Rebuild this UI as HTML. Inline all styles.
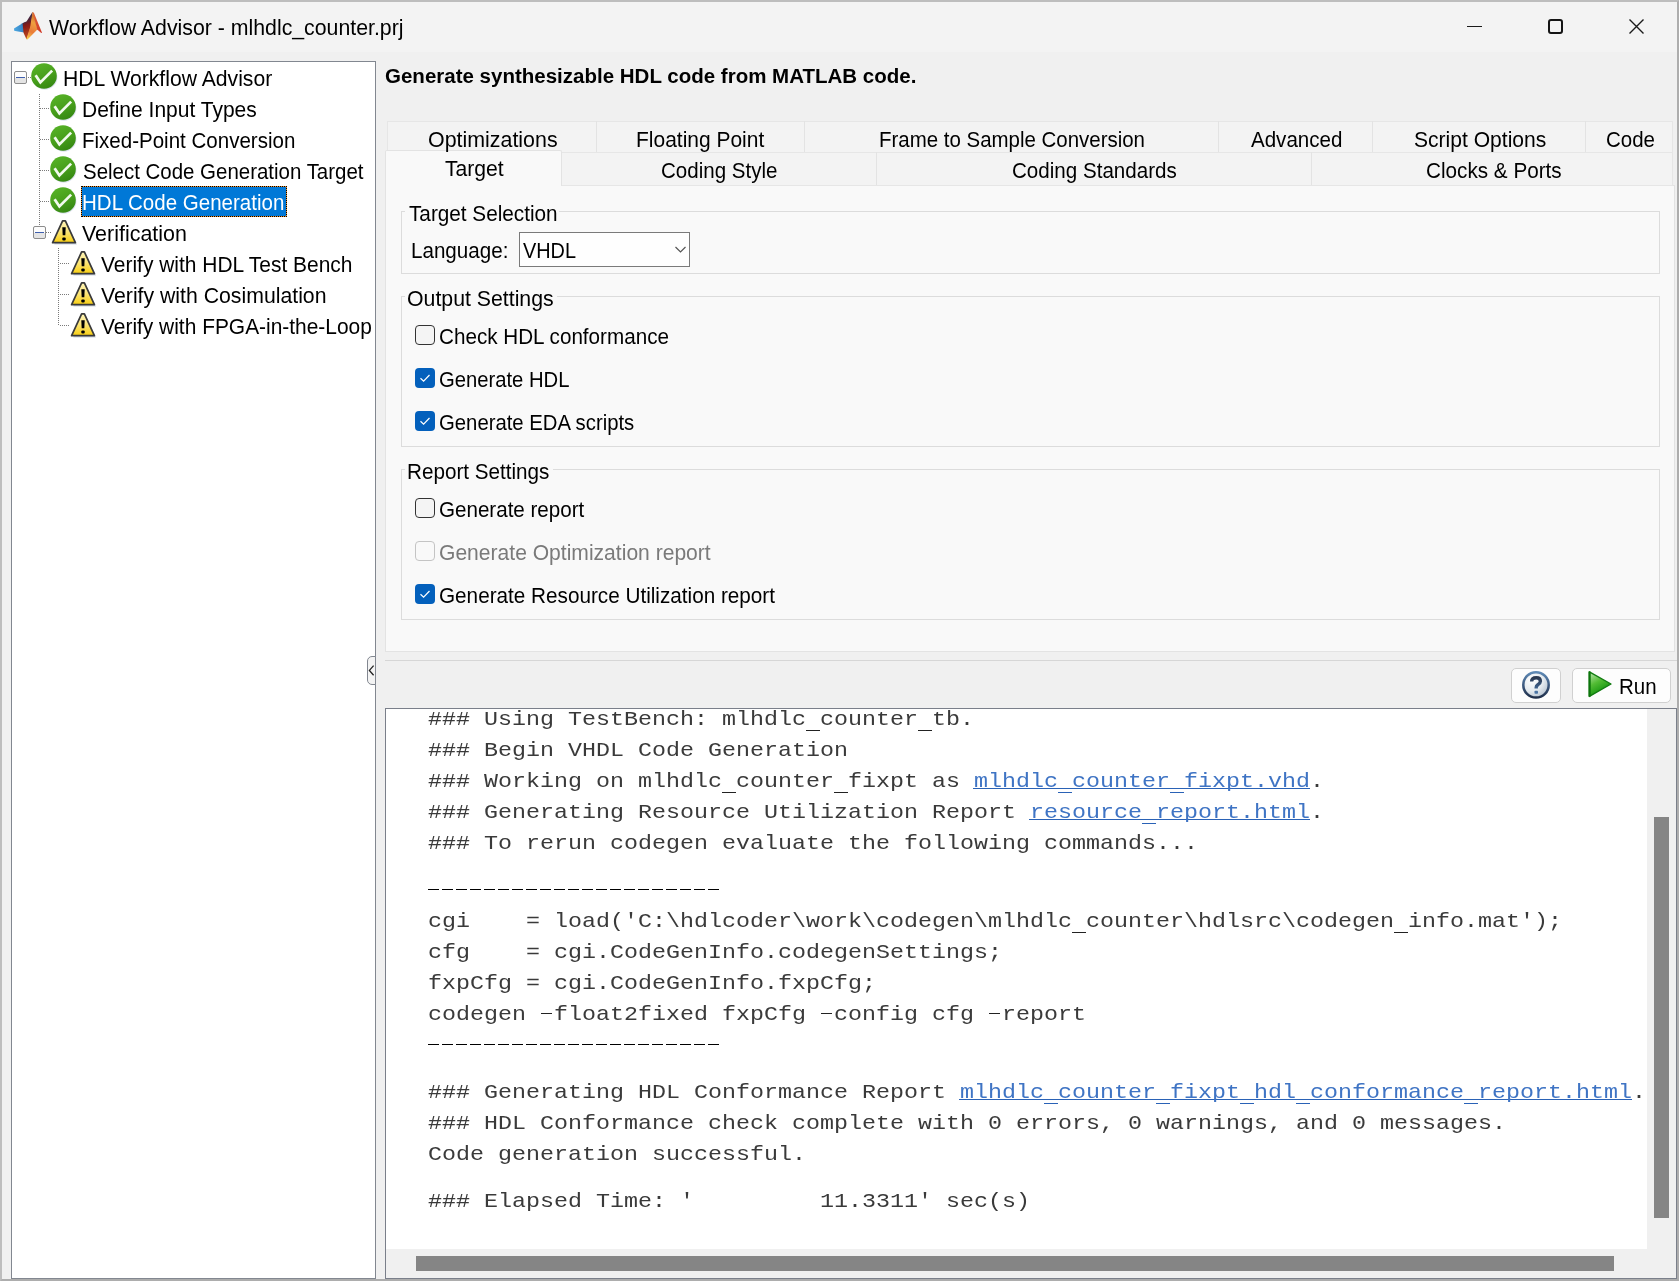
<!DOCTYPE html>
<html><head><meta charset="utf-8">
<style>
html,body{margin:0;padding:0;}
body{width:1679px;height:1281px;position:relative;overflow:hidden;background:#f0f0f0;font-family:"Liberation Sans",sans-serif;}
.a{position:absolute;box-sizing:border-box;}
.t{position:absolute;white-space:pre;transform-origin:0 0;font-family:"Liberation Sans",sans-serif;}
.m{position:absolute;left:428px;white-space:pre;font-family:"Liberation Mono",monospace;color:#3a3a3a;line-height:31px;font-size:23.3333px;letter-spacing:0.000px;}
.lk{color:#3f74c4;}
.us{width:14px;height:1px;background:#222;}
.dotv{position:absolute;width:1px;background-image:linear-gradient(to bottom,#7a7a7a 50%,transparent 50%);background-size:1px 2px;}
.doth{position:absolute;height:1px;background-image:linear-gradient(to right,#7a7a7a 50%,transparent 50%);background-size:2px 1px;}
.cb{position:absolute;width:20px;height:20px;box-sizing:border-box;border-radius:4px;}
.cbu{border:1px solid #333;background:#f4f4f4;}
.cbd{border:1px solid #c4c4c4;background:#f9f9f9;}
.cbc{background:#0360bc;}
.grp{position:absolute;box-sizing:border-box;border:1px solid #dcdcdc;}
.exp{position:absolute;width:13px;height:13px;box-sizing:border-box;border:1px solid #8c8c8c;border-radius:2px;background:linear-gradient(#fcfcfc 6px,#e4e4e4 6px);}
.exp::after{content:"";position:absolute;left:1px;top:5px;width:9px;height:1px;background:#3f5fae;}
</style></head><body>
<!-- window border -->
<div class="a" style="left:0;top:0;width:1679px;height:1281px;border:2px solid #adadad;border-top-color:#bdbdbd;border-left-color:#bdbdbd;"></div>
<!-- title bar -->
<div class="a" style="left:2px;top:2px;width:1675px;height:50px;background:#f3f3f3;"></div>
<!-- matlab logo -->
<svg class="a" style="left:10px;top:8px" width="36" height="36" viewBox="0 0 36 36">
  <defs>
    <filter id="mlb" x="-20%" y="-20%" width="140%" height="140%"><feGaussianBlur stdDeviation="0.55"/></filter>
    <linearGradient id="mlbl" x1="0" y1="0.5" x2="1" y2="0.3"><stop offset="0" stop-color="#4aa6e0"/><stop offset="0.6" stop-color="#3a88c8"/><stop offset="1" stop-color="#24508a"/></linearGradient>
    <linearGradient id="mlor" x1="0.5" y1="0" x2="0.3" y2="1"><stop offset="0" stop-color="#c8641e"/><stop offset="0.35" stop-color="#eea040"/><stop offset="0.7" stop-color="#ea7a38"/><stop offset="1" stop-color="#f4c848"/></linearGradient>
    <linearGradient id="mlrd" x1="0" y1="0" x2="1" y2="1"><stop offset="0" stop-color="#e06a3a"/><stop offset="1" stop-color="#cf3424"/></linearGradient>
    <linearGradient id="mldk" x1="0" y1="0" x2="0.15" y2="1"><stop offset="0" stop-color="#2c3a64"/><stop offset="0.35" stop-color="#4a2438"/><stop offset="0.55" stop-color="#8a1a14"/><stop offset="1" stop-color="#c04a20"/></linearGradient>
  </defs>
  <g filter="url(#mlb)">
    <polygon points="4,20.5 12.5,15.2 16.5,13.6 14.2,24.6 8,23.6 4.2,22.8" fill="url(#mlbl)"/>
    <polygon points="12.6,15.3 16.5,13.6 22.5,4 21.3,17 17.6,28.5 16.6,31.5 13.6,25" fill="url(#mldk)"/>
    <polygon points="22.5,4 23.6,5 27.4,21.6 17.5,31.5 16.4,31 20.2,19" fill="url(#mlor)"/>
    <polygon points="22.5,4 24,5 32,24.8 31.2,25 27.2,21.4" fill="url(#mlrd)"/>
  </g>
</svg>
<!-- window controls -->
<div class="a" style="left:1467px;top:26px;width:15px;height:1px;background:#1a1a1a;"></div>
<div class="a" style="left:1548px;top:19px;width:15px;height:15px;border:2px solid #141414;border-radius:3px;"></div>
<svg class="a" style="left:1628px;top:18px" width="17" height="17" viewBox="0 0 17 17"><path d="M1.5 1.5 L15.5 15.5 M15.5 1.5 L1.5 15.5" stroke="#1a1a1a" stroke-width="1.4"/></svg>

<!-- tree panel -->
<div class="a" style="left:11px;top:61px;width:365px;height:1218px;background:#fff;border:1px solid #828790;"></div>
<!-- tree lines -->
<div class="doth" style="left:28px;top:77px;width:3px;"></div>
<div class="dotv" style="left:39px;top:94px;height:132px;"></div>
<div class="doth" style="left:40px;top:108px;width:10px;"></div>
<div class="doth" style="left:40px;top:139px;width:10px;"></div>
<div class="doth" style="left:40px;top:170px;width:10px;"></div>
<div class="doth" style="left:40px;top:201px;width:10px;"></div>
<div class="doth" style="left:46px;top:232px;width:5px;"></div>
<div class="dotv" style="left:58px;top:248px;height:78px;"></div>
<div class="doth" style="left:60px;top:263px;width:10px;"></div>
<div class="doth" style="left:60px;top:294px;width:10px;"></div>
<div class="doth" style="left:60px;top:325px;width:10px;"></div>
<div class="exp" style="left:14px;top:71px;"></div>
<div class="exp" style="left:33px;top:226px;"></div>
<!-- check icons -->
<svg width="0" height="0" style="position:absolute">
  <defs>
    <linearGradient id="gck" x1="0.3" y1="0.05" x2="0.7" y2="0.95"><stop offset="0" stop-color="#55b026"/><stop offset="0.5" stop-color="#48a01c"/><stop offset="1" stop-color="#358812"/></linearGradient>
    <linearGradient id="gwn" x1="0" y1="0" x2="0" y2="1"><stop offset="0" stop-color="#fff5b8"/><stop offset="0.45" stop-color="#fbe680"/><stop offset="1" stop-color="#f9cf10"/></linearGradient>
    <linearGradient id="gpl" x1="0" y1="0" x2="1" y2="1"><stop offset="0" stop-color="#7ad06a"/><stop offset="0.5" stop-color="#3aa82a"/><stop offset="1" stop-color="#127a10"/></linearGradient>
    <radialGradient id="ghp" cx="0.5" cy="0.75" r="0.7"><stop offset="0" stop-color="#ffffff"/><stop offset="0.6" stop-color="#dde5ee"/><stop offset="1" stop-color="#a9b8c8"/></radialGradient>
    
    
  </defs>
</svg>
<svg class="a" style="left:31px;top:63px;overflow:visible" width="26" height="26" viewBox="0 0 26 26"><circle cx="13.8" cy="14.2" r="12.6" fill="#b4c0dc" opacity="0.45"/>
      <circle cx="13" cy="13" r="12.8" fill="url(#gck)"/>
      <path d="M5.3 13.3 L9.4 19.4 L20.2 8.6" fill="none" stroke="#f2faee" stroke-width="2.7" stroke-linecap="square" stroke-linejoin="miter"/></svg>
<svg class="a" style="left:50px;top:94px;overflow:visible" width="26" height="26" viewBox="0 0 26 26"><circle cx="13.8" cy="14.2" r="12.6" fill="#b4c0dc" opacity="0.45"/>
      <circle cx="13" cy="13" r="12.8" fill="url(#gck)"/>
      <path d="M5.3 13.3 L9.4 19.4 L20.2 8.6" fill="none" stroke="#f2faee" stroke-width="2.7" stroke-linecap="square" stroke-linejoin="miter"/></svg>
<svg class="a" style="left:50px;top:125px;overflow:visible" width="26" height="26" viewBox="0 0 26 26"><circle cx="13.8" cy="14.2" r="12.6" fill="#b4c0dc" opacity="0.45"/>
      <circle cx="13" cy="13" r="12.8" fill="url(#gck)"/>
      <path d="M5.3 13.3 L9.4 19.4 L20.2 8.6" fill="none" stroke="#f2faee" stroke-width="2.7" stroke-linecap="square" stroke-linejoin="miter"/></svg>
<svg class="a" style="left:50px;top:156px;overflow:visible" width="26" height="26" viewBox="0 0 26 26"><circle cx="13.8" cy="14.2" r="12.6" fill="#b4c0dc" opacity="0.45"/>
      <circle cx="13" cy="13" r="12.8" fill="url(#gck)"/>
      <path d="M5.3 13.3 L9.4 19.4 L20.2 8.6" fill="none" stroke="#f2faee" stroke-width="2.7" stroke-linecap="square" stroke-linejoin="miter"/></svg>
<svg class="a" style="left:50px;top:187px;overflow:visible" width="26" height="26" viewBox="0 0 26 26"><circle cx="13.8" cy="14.2" r="12.6" fill="#b4c0dc" opacity="0.45"/>
      <circle cx="13" cy="13" r="12.8" fill="url(#gck)"/>
      <path d="M5.3 13.3 L9.4 19.4 L20.2 8.6" fill="none" stroke="#f2faee" stroke-width="2.7" stroke-linecap="square" stroke-linejoin="miter"/></svg>
<svg class="a" style="left:52px;top:220px;overflow:visible" width="25" height="25" viewBox="0 0 25 25"><path d="M12 3.5 L15 3.5 L25 24.6 L2.2 24.6 Z" fill="#aebad0" opacity="0.6"/>
      <path d="M10.6 0.9 L13.4 0.9 L23.4 22.7 L0.6 22.7 Z" fill="url(#gwn)" stroke="#3a3a3a" stroke-width="1.7" stroke-linejoin="round"/>
      <path d="M10.3 7.2 L13.7 7.2 L13.3 15.3 L10.7 15.3 Z" fill="#000"/>
      <rect x="10.3" y="17.4" width="3.4" height="3.2" rx="1" fill="#000"/></svg>
<svg class="a" style="left:71px;top:251px;overflow:visible" width="25" height="25" viewBox="0 0 25 25"><path d="M12 3.5 L15 3.5 L25 24.6 L2.2 24.6 Z" fill="#aebad0" opacity="0.6"/>
      <path d="M10.6 0.9 L13.4 0.9 L23.4 22.7 L0.6 22.7 Z" fill="url(#gwn)" stroke="#3a3a3a" stroke-width="1.7" stroke-linejoin="round"/>
      <path d="M10.3 7.2 L13.7 7.2 L13.3 15.3 L10.7 15.3 Z" fill="#000"/>
      <rect x="10.3" y="17.4" width="3.4" height="3.2" rx="1" fill="#000"/></svg>
<svg class="a" style="left:71px;top:282px;overflow:visible" width="25" height="25" viewBox="0 0 25 25"><path d="M12 3.5 L15 3.5 L25 24.6 L2.2 24.6 Z" fill="#aebad0" opacity="0.6"/>
      <path d="M10.6 0.9 L13.4 0.9 L23.4 22.7 L0.6 22.7 Z" fill="url(#gwn)" stroke="#3a3a3a" stroke-width="1.7" stroke-linejoin="round"/>
      <path d="M10.3 7.2 L13.7 7.2 L13.3 15.3 L10.7 15.3 Z" fill="#000"/>
      <rect x="10.3" y="17.4" width="3.4" height="3.2" rx="1" fill="#000"/></svg>
<svg class="a" style="left:71px;top:313px;overflow:visible" width="25" height="25" viewBox="0 0 25 25"><path d="M12 3.5 L15 3.5 L25 24.6 L2.2 24.6 Z" fill="#aebad0" opacity="0.6"/>
      <path d="M10.6 0.9 L13.4 0.9 L23.4 22.7 L0.6 22.7 Z" fill="url(#gwn)" stroke="#3a3a3a" stroke-width="1.7" stroke-linejoin="round"/>
      <path d="M10.3 7.2 L13.7 7.2 L13.3 15.3 L10.7 15.3 Z" fill="#000"/>
      <rect x="10.3" y="17.4" width="3.4" height="3.2" rx="1" fill="#000"/></svg>
<!-- selection -->
<div class="a" style="left:81px;top:186px;width:206px;height:31px;background:#f0902a;"></div>
<div class="a" style="left:81px;top:186px;width:206px;height:31px;background:#0078d7;background-clip:padding-box;border:1px dotted #000;"></div>

<!-- collapse tab -->
<div class="a" style="left:367px;top:656px;width:9px;height:29px;background:#f4f4f4;border:1px solid #828790;border-radius:5px 0 0 5px;"></div>
<svg class="a" style="left:367px;top:664px" width="8" height="13"><path d="M6.6 1.6 L2.4 6.4 L6.6 11.2" fill="none" stroke="#222" stroke-width="1.3"/></svg>

<!-- tabs -->
<div class="a" style="left:387px;top:121px;width:1286px;height:32px;background:#f3f3f3;border:1px solid #e6e6e6;"></div>
<div class="a" style="left:596px;top:121px;width:1px;height:31px;background:#e3e3e3;"></div>
<div class="a" style="left:804px;top:121px;width:1px;height:31px;background:#e3e3e3;"></div>
<div class="a" style="left:1218px;top:121px;width:1px;height:31px;background:#e3e3e3;"></div>
<div class="a" style="left:1372px;top:121px;width:1px;height:31px;background:#e3e3e3;"></div>
<div class="a" style="left:1585px;top:121px;width:1px;height:31px;background:#e3e3e3;"></div>
<!-- content panel -->
<div class="a" style="left:385px;top:185px;width:1290px;height:467px;background:#f9f9f9;border:1px solid #e3e3e3;"></div>
<!-- bottom tab row -->
<div class="a" style="left:561px;top:152px;width:1112px;height:34px;background:#f3f3f3;border:1px solid #e6e6e6;border-left:none;"></div>
<div class="a" style="left:561px;top:152px;width:1px;height:34px;background:#e3e3e3;"></div>
<div class="a" style="left:876px;top:152px;width:1px;height:33px;background:#e3e3e3;"></div>
<div class="a" style="left:1311px;top:152px;width:1px;height:33px;background:#e3e3e3;"></div>
<!-- selected tab -->
<div class="a" style="left:385px;top:150px;width:177px;height:36px;background:#f9f9f9;border:1px solid #e3e3e3;border-bottom:none;border-radius:2px 2px 0 0;"></div>

<!-- groups -->
<div class="grp" style="left:401px;top:211px;width:1259px;height:63px;"></div>
<div class="grp" style="left:401px;top:296px;width:1259px;height:151px;"></div>
<div class="grp" style="left:401px;top:469px;width:1259px;height:151px;"></div>
<!-- label gaps -->
<div class="a" style="left:405px;top:205px;width:154px;height:12px;background:#f9f9f9;"></div>
<div class="a" style="left:405px;top:290px;width:152px;height:12px;background:#f9f9f9;"></div>
<div class="a" style="left:405px;top:463px;width:148px;height:12px;background:#f9f9f9;"></div>
<!-- dropdown -->
<div class="a" style="left:519px;top:232px;width:171px;height:35px;background:#fefefe;border:1px solid #7a7a7a;"></div>
<svg class="a" style="left:674px;top:245px" width="13" height="9"><path d="M1.5 2 L6.5 7 L11.5 2" fill="none" stroke="#555" stroke-width="1.2"/></svg>
<!-- checkboxes -->
<div class="cb cbu" style="left:415px;top:325px;"></div>
<div class="cb cbc" style="left:415px;top:368px;"><svg width="20" height="20"><path d="M5.5 10.2 L8.6 13.2 L14.5 7" fill="none" stroke="#fff" stroke-width="1.2"/></svg></div>
<div class="cb cbc" style="left:415px;top:411px;"><svg width="20" height="20"><path d="M5.5 10.2 L8.6 13.2 L14.5 7" fill="none" stroke="#fff" stroke-width="1.2"/></svg></div>
<div class="cb cbu" style="left:415px;top:498px;"></div>
<div class="cb cbd" style="left:415px;top:541px;"></div>
<div class="cb cbc" style="left:415px;top:584px;"><svg width="20" height="20"><path d="M5.5 10.2 L8.6 13.2 L14.5 7" fill="none" stroke="#fff" stroke-width="1.2"/></svg></div>

<!-- separator -->
<div class="a" style="left:385px;top:660px;width:1292px;height:1px;background:#d6d6d6;"></div>
<!-- buttons -->
<div class="a" style="left:1511px;top:668px;width:50px;height:35px;background:#fdfdfd;border:1px solid #d0d0d0;border-radius:5px;"></div>
<svg class="a" style="left:1521px;top:670px" width="30" height="30" viewBox="0 0 30 30">
  <defs>
    <linearGradient id="hpr" x1="0" y1="0" x2="0" y2="1"><stop offset="0" stop-color="#5f8ab6"/><stop offset="0.5" stop-color="#3d5a80"/><stop offset="1" stop-color="#1f2f4a"/></linearGradient>
    <radialGradient id="hpi" cx="0.35" cy="0.3" r="0.8"><stop offset="0" stop-color="#ffffff"/><stop offset="0.55" stop-color="#e4eaef"/><stop offset="1" stop-color="#aebccb"/></radialGradient>
    <linearGradient id="hpq" x1="0" y1="0" x2="0" y2="1"><stop offset="0" stop-color="#2a3850"/><stop offset="1" stop-color="#3f6490"/></linearGradient>
  </defs>
  <circle cx="15" cy="14.9" r="12.7" fill="url(#hpi)" stroke="url(#hpr)" stroke-width="2.5"/>
  <path d="M10.6 11.6 C10.6 9 12.6 7.7 15.3 7.7 C17.9 7.7 19.4 9.2 19.4 11.2 C19.4 13.2 17.8 14.2 16.6 15 C15.6 15.7 15.2 16.3 15.2 17.4 L15.2 18.6" fill="none" stroke="url(#hpq)" stroke-width="3.4"/>
  <rect x="13.5" y="20.7" width="3.5" height="3.1" rx="0.8" fill="#4a74a4"/>
</svg>
<div class="a" style="left:1572px;top:668px;width:99px;height:35px;background:#fdfdfd;border:1px solid #d0d0d0;border-radius:5px;"></div>
<svg class="a" style="left:1587px;top:670px" width="26" height="28" viewBox="0 0 26 28">
  <defs>
    <linearGradient id="pl1" x1="0.1" y1="0.1" x2="0.5" y2="0.9"><stop offset="0" stop-color="#a4dc94"/><stop offset="0.45" stop-color="#52bc34"/><stop offset="1" stop-color="#12940e"/></linearGradient>
  </defs>
  <path d="M2.4 1.8 L24 14 L2.4 26.4 Z" fill="url(#pl1)" stroke="#127c12" stroke-width="1.4" stroke-linejoin="round"/>
  <path d="M2.6 1.6 L2.6 26.6" stroke="#0c740c" stroke-width="2.2"/>
</svg>

<!-- console -->
<div class="a" style="left:385px;top:708px;width:1292px;height:571px;background:#fff;border:1px solid #7a7f8a;"></div>
<div class="a" style="left:1647px;top:709px;width:29px;height:569px;background:#f0f0f0;"></div>
<div class="a" style="left:386px;top:1249px;width:1290px;height:29px;background:#f0f0f0;"></div>
<div class="a" style="left:1654px;top:817px;width:15px;height:401px;background:#858585;"></div>
<div class="a" style="left:416px;top:1256px;width:1198px;height:15px;background:#858585;"></div>

<div class="a" style="left:428px;top:889px;width:291px;height:1px;background:repeating-linear-gradient(to right,#000 0,#000 11px,transparent 11px,transparent 14px);"></div>
<div class="a" style="left:428px;top:1044px;width:291px;height:1px;background:repeating-linear-gradient(to right,#000 0,#000 11px,transparent 11px,transparent 14px);"></div>
<div class="a" style="left:973px;top:788px;width:337px;height:1px;background:#2a62b6;"></div>
<div class="a" style="left:1029px;top:819px;width:281px;height:1px;background:#2a62b6;"></div>
<div class="a" style="left:959px;top:1099px;width:673px;height:1px;background:#2a62b6;"></div>
<div class="a us" style="left:806px;top:730px;background:#222"></div>
<div class="a us" style="left:918px;top:730px;background:#222"></div>
<div class="m" style="top:704.29px;transform-origin:0 21.71px;transform:scaleY(0.84)">### Using TestBench: mlhdlc counter tb.</div>
<div class="m" style="top:735.29px;transform-origin:0 21.71px;transform:scaleY(0.84)">### Begin VHDL Code Generation</div>
<div class="a us" style="left:722px;top:792px;background:#222"></div>
<div class="a us" style="left:834px;top:792px;background:#222"></div>
<div class="a us" style="left:1058px;top:792px;background:#2a62b6"></div>
<div class="a us" style="left:1170px;top:792px;background:#2a62b6"></div>
<div class="m" style="top:766.29px;transform-origin:0 21.71px;transform:scaleY(0.84)">### Working on mlhdlc counter fixpt as <span class="lk">mlhdlc counter fixpt.vhd</span>.</div>
<div class="a us" style="left:1142px;top:823px;background:#2a62b6"></div>
<div class="m" style="top:797.29px;transform-origin:0 21.71px;transform:scaleY(0.84)">### Generating Resource Utilization Report <span class="lk">resource report.html</span>.</div>
<div class="m" style="top:828.29px;transform-origin:0 21.71px;transform:scaleY(0.84)">### To rerun codegen evaluate the following commands...</div>
<div class="a us" style="left:1072px;top:932px;background:#222"></div>
<div class="a us" style="left:1394px;top:932px;background:#222"></div>
<div class="m" style="top:906.29px;transform-origin:0 21.71px;transform:scaleY(0.84)">cgi    = load('C:\hdlcoder\work\codegen\mlhdlc counter\hdlsrc\codegen info.mat');</div>
<div class="m" style="top:937.29px;transform-origin:0 21.71px;transform:scaleY(0.84)">cfg    = cgi.CodeGenInfo.codegenSettings;</div>
<div class="m" style="top:968.29px;transform-origin:0 21.71px;transform:scaleY(0.84)">fxpCfg = cgi.CodeGenInfo.fxpCfg;</div>
<div class="a" style="left:541px;top:1013px;width:11px;height:1px;background:#222"></div>
<div class="a" style="left:821px;top:1013px;width:11px;height:1px;background:#222"></div>
<div class="a" style="left:989px;top:1013px;width:11px;height:1px;background:#222"></div>
<div class="m" style="top:999.29px;transform-origin:0 21.71px;transform:scaleY(0.84)">codegen  float2fixed fxpCfg  config cfg  report</div>
<div class="a us" style="left:1044px;top:1103px;background:#2a62b6"></div>
<div class="a us" style="left:1156px;top:1103px;background:#2a62b6"></div>
<div class="a us" style="left:1240px;top:1103px;background:#2a62b6"></div>
<div class="a us" style="left:1296px;top:1103px;background:#2a62b6"></div>
<div class="a us" style="left:1464px;top:1103px;background:#2a62b6"></div>
<div class="m" style="top:1077.29px;transform-origin:0 21.71px;transform:scaleY(0.84)">### Generating HDL Conformance Report <span class="lk">mlhdlc counter fixpt hdl conformance report.html</span>.</div>
<div class="m" style="top:1108.29px;transform-origin:0 21.71px;transform:scaleY(0.84)">### HDL Conformance check complete with 0 errors, 0 warnings, and 0 messages.</div>
<div class="m" style="top:1139.29px;transform-origin:0 21.71px;transform:scaleY(0.84)">Code generation successful.</div>
<div class="m" style="top:1186.29px;transform-origin:0 21.71px;transform:scaleY(0.84)">### Elapsed Time: '         11.3311' sec(s)</div>
<div class="t" id="title" style="left:48.51px;top:16.74px;font-size:21.8px;line-height:21.8px;font-weight:normal;color:#000;transform:scaleX(0.9766)">Workflow Advisor - mlhdlc_counter.prj</div>
<div class="t" id="t1" style="left:63.01px;top:67.74px;font-size:21.8px;line-height:21.8px;font-weight:normal;color:#000;transform:scaleX(0.9704)">HDL Workflow Advisor</div>
<div class="t" id="t2" style="left:82.28px;top:98.74px;font-size:21.8px;line-height:21.8px;font-weight:normal;color:#000;transform:scaleX(0.9638)">Define Input Types</div>
<div class="t" id="t3" style="left:82.32px;top:129.74px;font-size:21.8px;line-height:21.8px;font-weight:normal;color:#000;transform:scaleX(0.9415)">Fixed-Point Conversion</div>
<div class="t" id="t4" style="left:83.07px;top:160.74px;font-size:21.8px;line-height:21.8px;font-weight:normal;color:#000;transform:scaleX(0.9384)">Select Code Generation Target</div>
<div class="t" id="t5" style="left:82.02px;top:191.74px;font-size:21.8px;line-height:21.8px;font-weight:normal;color:#fff;transform:scaleX(0.9416)">HDL Code Generation</div>
<div class="t" id="t6" style="left:82.31px;top:222.74px;font-size:21.8px;line-height:21.8px;font-weight:normal;color:#000;transform:scaleX(0.9837)">Verification</div>
<div class="t" id="t7" style="left:101.01px;top:253.74px;font-size:21.8px;line-height:21.8px;font-weight:normal;color:#000;transform:scaleX(0.9609)">Verify with HDL Test Bench</div>
<div class="t" id="t8" style="left:101.01px;top:284.74px;font-size:21.8px;line-height:21.8px;font-weight:normal;color:#000;transform:scaleX(0.9745)">Verify with Cosimulation</div>
<div class="t" id="t9" style="left:101.01px;top:315.74px;font-size:21.8px;line-height:21.8px;font-weight:normal;color:#000;transform:scaleX(0.9596)">Verify with FPGA-in-the-Loop</div>
<div class="t" id="head" style="left:384.96px;top:66.37px;font-size:20px;line-height:20px;font-weight:bold;color:#000;transform:scaleX(1.0254)">Generate synthesizable HDL code from MATLAB code.</div>
<div class="t" id="tab1" style="left:427.59px;top:128.74px;font-size:21.8px;line-height:21.8px;font-weight:normal;color:#000;transform:scaleX(0.9814)">Optimizations</div>
<div class="t" id="tab2" style="left:636.28px;top:128.74px;font-size:21.8px;line-height:21.8px;font-weight:normal;color:#000;transform:scaleX(0.9623)">Floating Point</div>
<div class="t" id="tab3" style="left:879.32px;top:128.74px;font-size:21.8px;line-height:21.8px;font-weight:normal;color:#000;transform:scaleX(0.9383)">Frame to Sample Conversion</div>
<div class="t" id="tab4" style="left:1250.96px;top:128.74px;font-size:21.8px;line-height:21.8px;font-weight:normal;color:#000;transform:scaleX(0.9423)">Advanced</div>
<div class="t" id="tab5" style="left:1414.04px;top:128.74px;font-size:21.8px;line-height:21.8px;font-weight:normal;color:#000;transform:scaleX(0.9666)">Script Options</div>
<div class="t" id="tab6" style="left:1606.36px;top:128.74px;font-size:21.8px;line-height:21.8px;font-weight:normal;color:#000;transform:scaleX(0.9393)">Code</div>
<div class="t" id="tab7" style="left:445.23px;top:157.74px;font-size:21.8px;line-height:21.8px;font-weight:normal;color:#000;transform:scaleX(0.9693)">Target</div>
<div class="t" id="tab8" style="left:660.66px;top:159.74px;font-size:21.8px;line-height:21.8px;font-weight:normal;color:#000;transform:scaleX(0.9422)">Coding Style</div>
<div class="t" id="tab9" style="left:1011.95px;top:159.74px;font-size:21.8px;line-height:21.8px;font-weight:normal;color:#000;transform:scaleX(0.9444)">Coding Standards</div>
<div class="t" id="tab10" style="left:1426.45px;top:159.74px;font-size:21.8px;line-height:21.8px;font-weight:normal;color:#000;transform:scaleX(0.9493)">Clocks &amp; Ports</div>
<div class="t" id="g1" style="left:408.93px;top:202.74px;font-size:21.8px;line-height:21.8px;font-weight:normal;color:#000;transform:scaleX(0.9507)">Target Selection</div>
<div class="t" id="lang" style="left:410.81px;top:239.74px;font-size:21.8px;line-height:21.8px;font-weight:normal;color:#000;transform:scaleX(0.9449)">Language:</div>
<div class="t" id="vhdl" style="left:523.21px;top:239.74px;font-size:21.8px;line-height:21.8px;font-weight:normal;color:#000;transform:scaleX(0.9122)">VHDL</div>
<div class="t" id="g2" style="left:407.49px;top:287.74px;font-size:21.8px;line-height:21.8px;font-weight:normal;color:#000;transform:scaleX(0.9762)">Output Settings</div>
<div class="t" id="c1" style="left:438.85px;top:325.74px;font-size:21.8px;line-height:21.8px;font-weight:normal;color:#000;transform:scaleX(0.9475)">Check HDL conformance</div>
<div class="t" id="c2" style="left:438.88px;top:368.74px;font-size:21.8px;line-height:21.8px;font-weight:normal;color:#000;transform:scaleX(0.9284)">Generate HDL</div>
<div class="t" id="c3" style="left:438.88px;top:411.74px;font-size:21.8px;line-height:21.8px;font-weight:normal;color:#000;transform:scaleX(0.9316)">Generate EDA scripts</div>
<div class="t" id="g3" style="left:407.30px;top:460.74px;font-size:21.8px;line-height:21.8px;font-weight:normal;color:#000;transform:scaleX(0.9480)">Report Settings</div>
<div class="t" id="c4" style="left:438.86px;top:498.74px;font-size:21.8px;line-height:21.8px;font-weight:normal;color:#000;transform:scaleX(0.9441)">Generate report</div>
<div class="t" id="c5" style="left:438.84px;top:541.74px;font-size:21.8px;line-height:21.8px;font-weight:normal;color:#7a7a7a;transform:scaleX(0.9667)">Generate Optimization report</div>
<div class="t" id="c6" style="left:438.86px;top:584.74px;font-size:21.8px;line-height:21.8px;font-weight:normal;color:#000;transform:scaleX(0.9498)">Generate Resource Utilization report</div>
<div class="t" id="run" style="left:1618.92px;top:675.74px;font-size:21.8px;line-height:21.8px;font-weight:normal;color:#000;transform:scaleX(0.9403)">Run</div>
</body></html>
